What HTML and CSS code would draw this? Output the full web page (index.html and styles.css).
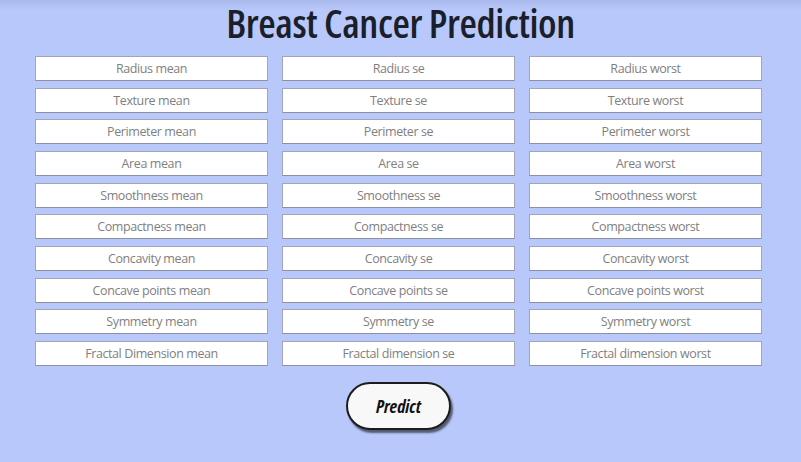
FILE: index.html
```html
<!DOCTYPE html>
<html lang="en">
<head>
<meta charset="utf-8">
<title>Breast Cancer Prediction</title>
<link rel="stylesheet" href="styles.css">
</head>
<body>
<main class="page">
  <h1 class="title">Breast Cancer Prediction</h1>
  <form class="form">
    <div class="grid">
      <input class="field" placeholder="Radius mean">
      <input class="field" placeholder="Radius se">
      <input class="field" placeholder="Radius worst">
      <input class="field" placeholder="Texture mean">
      <input class="field" placeholder="Texture se">
      <input class="field" placeholder="Texture worst">
      <input class="field" placeholder="Perimeter mean">
      <input class="field" placeholder="Perimeter se">
      <input class="field" placeholder="Perimeter worst">
      <input class="field" placeholder="Area mean">
      <input class="field" placeholder="Area se">
      <input class="field" placeholder="Area worst">
      <input class="field" placeholder="Smoothness mean">
      <input class="field" placeholder="Smoothness se">
      <input class="field" placeholder="Smoothness worst">
      <input class="field" placeholder="Compactness mean">
      <input class="field" placeholder="Compactness se">
      <input class="field" placeholder="Compactness worst">
      <input class="field" placeholder="Concavity mean">
      <input class="field" placeholder="Concavity se">
      <input class="field" placeholder="Concavity worst">
      <input class="field" placeholder="Concave points mean">
      <input class="field" placeholder="Concave points se">
      <input class="field" placeholder="Concave points worst">
      <input class="field" placeholder="Symmetry mean">
      <input class="field" placeholder="Symmetry se">
      <input class="field" placeholder="Symmetry worst">
      <input class="field" placeholder="Fractal Dimension mean">
      <input class="field" placeholder="Fractal dimension se">
      <input class="field" placeholder="Fractal dimension worst">
    </div>
    <div class="actions">
      <button type="button" class="predict">Predict</button>
    </div>
  </form>
</main>
</body>
</html>
```
FILE: styles.css
```css
html, body {
  margin: 0;
  padding: 0;
}
body {
  background: #b8c8fb;
  font-family: "Open Sans", "Liberation Sans", sans-serif;
  height: 462px;
  overflow: hidden;
}
.page {
  min-height: 462px;
  background: linear-gradient(to bottom, #a9b9ec 0px, #b8c8fb 10px);
}
.title {
  margin: 0;
  height: 52px;
  font-size: 40px;
  line-height: 46px;
  font-weight: 600;
  font-stretch: 75%;
  letter-spacing: -0.4px;
  color: #1b1f2b;
  text-align: center;
}
.form {
  margin: 0;
  padding-top: 4px;
}
.grid {
  display: grid;
  grid-template-columns: repeat(3, 233px);
  column-gap: 14px;
  row-gap: 6.67px;
  margin-left: 35px;
}
.field {
  box-sizing: border-box;
  height: 25px;
  margin: 0;
  padding: 0 4px;
  border: 1px solid #a2a6b4;
  border-bottom-color: #8c90a0;
  background: #fff;
  font-family: inherit;
  font-size: 12.5px;
  letter-spacing: -0.4px;
  color: #333;
  text-align: center;
  outline: none;
}
.field::placeholder {
  color: #7f7f7f;
  opacity: 1;
}
.actions {
  display: flex;
  justify-content: center;
  padding-top: 16px;
  padding-right: 4px;
}
.predict {
  box-sizing: border-box;
  width: 105px;
  height: 48px;
  border: 2px solid #1c1c1c;
  border-radius: 24px;
  background: #f8f8f8;
  box-shadow: 2px 3px 2px rgba(0, 0, 0, 0.55);
  font-family: inherit;
  font-stretch: 75%;
  font-size: 18px;
  font-weight: 700;
  font-style: italic;
  color: #111;
  cursor: pointer;
}
```
